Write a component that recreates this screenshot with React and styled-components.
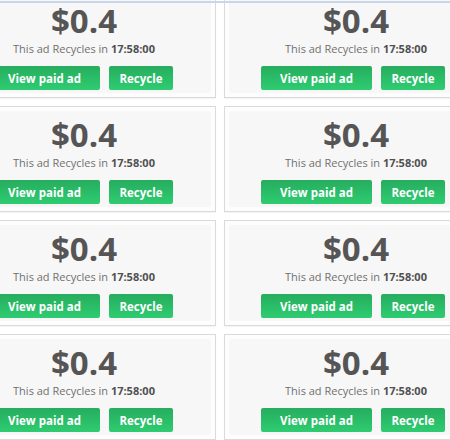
import React from "react";
import styled, { createGlobalStyle } from "styled-components";

const GlobalStyle = createGlobalStyle`
  html, body {
    margin: 0;
    padding: 0;
    background: #ffffff;
    overflow: hidden;
  }
`;

const TopLine = styled.div`
  position: fixed;
  top: 1px;
  left: 0;
  right: 0;
  height: 2px;
  background: #c9d6ea;
`;

const Grid = styled.div`
  display: grid;
  grid-template-columns: 264px 264px;
  grid-auto-rows: 106px;
  column-gap: 8px;
  row-gap: 8px;
  margin: -8px 0 0 -48px;
  width: 536px;
  font-family: "Open Sans", "Liberation Sans", sans-serif;
`;

const Card = styled.div`
  box-sizing: border-box;
  border: 1px solid #dadada;
  background: #fdfdfd;
  padding: 4px;
  box-shadow: 0 1px 1px rgba(0, 0, 0, 0.04);
`;

const Panel = styled.div`
  box-sizing: border-box;
  height: 100%;
  background: #f7f7f7;
  border-radius: 3px;
  display: flex;
  flex-direction: column;
  align-items: center;
  padding-top: 3px;
`;

const Price = styled.div`
  font-size: 33px;
  line-height: 42px;
  font-weight: 700;
  color: #555555;
`;

const Timer = styled.div`
  font-size: 11px;
  line-height: 14px;
  color: #707070;

  b {
    color: #505050;
    font-weight: 700;
  }
`;

const Actions = styled.div`
  display: flex;
  gap: 9px;
  margin-top: 10px;
  margin-right: 6px;
`;

const Button = styled.button`
  box-sizing: border-box;
  width: ${(p) => p.$w}px;
  height: 24px;
  border: none;
  border-radius: 2px;
  background: linear-gradient(#26ad5e, #2ecc71);
  color: #ffffff;
  font-family: "Open Sans", "Liberation Sans", sans-serif;
  font-weight: 700;
  font-size: 11.5px;
  padding: 0;
  cursor: pointer;
`;

function AdCard() {
  return (
    <Card>
      <Panel>
        <Price>$0.4</Price>
        <Timer>
          This ad Recycles in <b>17:58:00</b>
        </Timer>
        <Actions>
          <Button $w={111}>View paid ad</Button>
          <Button $w={64}>Recycle</Button>
        </Actions>
      </Panel>
    </Card>
  );
}

export default function App() {
  const ads = Array.from({ length: 8 });
  return (
    <>
      <GlobalStyle />
      <Grid>
        {ads.map((_, i) => (
          <AdCard key={i} />
        ))}
      </Grid>
      <TopLine />
    </>
  );
}
